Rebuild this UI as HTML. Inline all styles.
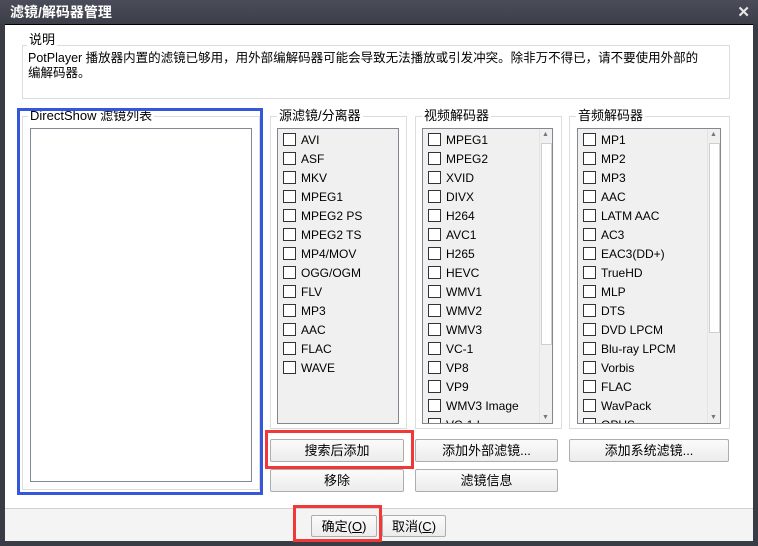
<!DOCTYPE html>
<html><head><meta charset="utf-8"><style>
*{margin:0;padding:0;box-sizing:border-box}
body{width:758px;height:546px;background:#3a3c45;position:relative;overflow:hidden;font-family:"Liberation Sans","Noto Sans CJK SC",sans-serif;font-size:12px;color:#000}
.a{position:absolute}
.title{left:0;top:0;width:758px;height:24px;background:linear-gradient(#4a4d59,#3c3e48);color:#fff;font-size:14px;font-weight:bold;line-height:24px;padding-left:10px}
.x{right:8px;top:3px;color:#e8e8e8;font-size:15px;font-weight:bold}
.content{left:5px;top:24px;width:748px;height:517px;background:#fff;border-top:1px solid #000}
.foot{left:5px;top:508px;width:748px;height:33px;background:#f4f4f4;border-top:1px solid #d0d0d0}
.grp{border:1px solid #dcdcdc}
.lbl{background:#fff;padding:0 2px;font-size:13px;line-height:14px}
.list{background:#f0f0f0;border:1px solid #828790;overflow:hidden}
.row{position:absolute;left:5px;height:19px;line-height:19px;white-space:nowrap}
.cb{display:inline-block;width:13px;height:13px;border:1px solid #333;background:#fff;vertical-align:-2px;margin-right:5px}
.sb{position:absolute;right:0;top:0;width:13px;height:100%;background:#f0f0f0;border-left:1px solid #e4e4e4}
.th{position:absolute;left:1px;width:11px;background:#fff;border:1px solid #cfcfcf}
.ar{position:absolute;left:2px;font-size:7px;color:#777}
.btn{border:1px solid #adadad;border-radius:2px;background:linear-gradient(#fbfbfb,#ececec);text-align:center;font-size:13px;line-height:21px}
.red{border:3px solid #f03838}
</style></head><body>
<div class="a title">滤镜/解码器管理</div>
<div class="a x">✕</div>
<div class="a content"></div>
<div class="a foot"></div>

<div class="a grp" style="left:22px;top:45px;width:708px;height:54px"></div>
<div class="a lbl" style="left:27px;top:33px">说明</div>
<div class="a" style="left:28px;top:51px;width:694px;font-size:12.5px;line-height:15px">PotPlayer 播放器内置的滤镜已够用，用外部编解码器可能会导致无法播放或引发冲突。除非万不得已，请不要使用外部的<br>编解码器。</div>

<div class="a grp" style="left:22px;top:116px;width:238px;height:374px"></div>
<div class="a lbl" style="left:28px;top:109px">DirectShow 滤镜列表</div>
<div class="a" style="left:30px;top:128px;width:222px;height:354px;border:1px solid #828790;background:#fff"></div>
<div class="a" style="left:17px;top:108px;width:246px;height:387px;border:3px solid #3658d8"></div>

<div class="a grp" style="left:270px;top:116px;width:137px;height:313px"></div>
<div class="a lbl" style="left:277px;top:109px">源滤镜/分离器</div>
<div class="a list" style="left:277px;top:128px;width:122px;height:296px">
<div class="row" style="top:2px"><span class="cb"></span>AVI</div>
<div class="row" style="top:21px"><span class="cb"></span>ASF</div>
<div class="row" style="top:40px"><span class="cb"></span>MKV</div>
<div class="row" style="top:59px"><span class="cb"></span>MPEG1</div>
<div class="row" style="top:78px"><span class="cb"></span>MPEG2 PS</div>
<div class="row" style="top:97px"><span class="cb"></span>MPEG2 TS</div>
<div class="row" style="top:116px"><span class="cb"></span>MP4/MOV</div>
<div class="row" style="top:135px"><span class="cb"></span>OGG/OGM</div>
<div class="row" style="top:154px"><span class="cb"></span>FLV</div>
<div class="row" style="top:173px"><span class="cb"></span>MP3</div>
<div class="row" style="top:192px"><span class="cb"></span>AAC</div>
<div class="row" style="top:211px"><span class="cb"></span>FLAC</div>
<div class="row" style="top:230px"><span class="cb"></span>WAVE</div>
</div>

<div class="a grp" style="left:415px;top:116px;width:147px;height:313px"></div>
<div class="a lbl" style="left:422px;top:109px">视频解码器</div>
<div class="a list" style="left:422px;top:128px;width:131px;height:296px">
<div class="row" style="top:2px"><span class="cb"></span>MPEG1</div>
<div class="row" style="top:21px"><span class="cb"></span>MPEG2</div>
<div class="row" style="top:40px"><span class="cb"></span>XVID</div>
<div class="row" style="top:59px"><span class="cb"></span>DIVX</div>
<div class="row" style="top:78px"><span class="cb"></span>H264</div>
<div class="row" style="top:97px"><span class="cb"></span>AVC1</div>
<div class="row" style="top:116px"><span class="cb"></span>H265</div>
<div class="row" style="top:135px"><span class="cb"></span>HEVC</div>
<div class="row" style="top:154px"><span class="cb"></span>WMV1</div>
<div class="row" style="top:173px"><span class="cb"></span>WMV2</div>
<div class="row" style="top:192px"><span class="cb"></span>WMV3</div>
<div class="row" style="top:211px"><span class="cb"></span>VC-1</div>
<div class="row" style="top:230px"><span class="cb"></span>VP8</div>
<div class="row" style="top:249px"><span class="cb"></span>VP9</div>
<div class="row" style="top:268px"><span class="cb"></span>WMV3 Image</div>
<div class="row" style="top:287px"><span class="cb"></span>VC-1 I</div>
<div class="sb"><span class="ar" style="top:2px">▲</span><div class="th" style="top:14px;height:202px"></div><span class="ar" style="bottom:2px">▼</span></div>
</div>

<div class="a grp" style="left:569px;top:116px;width:161px;height:313px"></div>
<div class="a lbl" style="left:576px;top:109px">音频解码器</div>
<div class="a list" style="left:577px;top:128px;width:144px;height:296px">
<div class="row" style="top:2px"><span class="cb"></span>MP1</div>
<div class="row" style="top:21px"><span class="cb"></span>MP2</div>
<div class="row" style="top:40px"><span class="cb"></span>MP3</div>
<div class="row" style="top:59px"><span class="cb"></span>AAC</div>
<div class="row" style="top:78px"><span class="cb"></span>LATM AAC</div>
<div class="row" style="top:97px"><span class="cb"></span>AC3</div>
<div class="row" style="top:116px"><span class="cb"></span>EAC3(DD+)</div>
<div class="row" style="top:135px"><span class="cb"></span>TrueHD</div>
<div class="row" style="top:154px"><span class="cb"></span>MLP</div>
<div class="row" style="top:173px"><span class="cb"></span>DTS</div>
<div class="row" style="top:192px"><span class="cb"></span>DVD LPCM</div>
<div class="row" style="top:211px"><span class="cb"></span>Blu-ray LPCM</div>
<div class="row" style="top:230px"><span class="cb"></span>Vorbis</div>
<div class="row" style="top:249px"><span class="cb"></span>FLAC</div>
<div class="row" style="top:268px"><span class="cb"></span>WavPack</div>
<div class="row" style="top:287px"><span class="cb"></span>OPUS</div>
<div class="sb"><span class="ar" style="top:2px">▲</span><div class="th" style="top:14px;height:190px"></div><span class="ar" style="bottom:2px">▼</span></div>
</div>

<div class="a btn" style="left:270px;top:439px;width:134px;height:23px">搜索后添加</div>
<div class="a red" style="left:265px;top:430px;width:149px;height:39px"></div>
<div class="a btn" style="left:270px;top:469px;width:134px;height:23px">移除</div>
<div class="a btn" style="left:415px;top:439px;width:143px;height:23px">添加外部滤镜...</div>
<div class="a btn" style="left:415px;top:469px;width:143px;height:23px">滤镜信息</div>
<div class="a btn" style="left:569px;top:439px;width:160px;height:23px">添加系统滤镜...</div>

<div class="a btn" style="left:311px;top:515px;width:66px;height:22px">确定(<u>O</u>)</div>
<div class="a btn" style="left:382px;top:515px;width:64px;height:22px">取消(<u>C</u>)</div>
<div class="a red" style="left:293px;top:505px;width:89px;height:37px"></div>
</body></html>
